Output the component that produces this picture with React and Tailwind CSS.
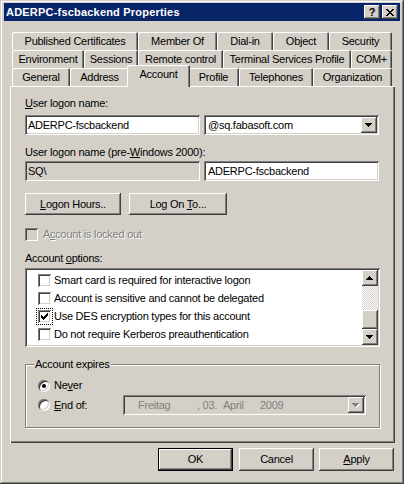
import React from 'react';

const raised =
  'shadow-[inset_-1px_-1px_0_#404040,inset_1px_1px_0_#ffffff,inset_-2px_-2px_0_#808080,inset_2px_2px_0_#d4d0c8]';
const sunken =
  'shadow-[inset_1px_1px_0_#808080,inset_-1px_-1px_0_#ffffff,inset_2px_2px_0_#404040,inset_-2px_-2px_0_#d4d0c8]';

const Arrow = ({ up = false, color = '#000000', shadow = false }) => (
  <svg width="8" height="5" viewBox="0 0 8 5" shapeRendering="crispEdges">
    {shadow && (
      <g fill="#ffffff" transform="translate(1 1)">
        <rect x="0" y="0" width="7" height="1" />
        <rect x="1" y="1" width="5" height="1" />
        <rect x="2" y="2" width="3" height="1" />
        <rect x="3" y="3" width="1" height="1" />
      </g>
    )}
    <g fill={color} transform={up ? 'translate(0 4) scale(1 -1)' : undefined}>
      <rect x="0" y="0" width="7" height="1" />
      <rect x="1" y="1" width="5" height="1" />
      <rect x="2" y="2" width="3" height="1" />
      <rect x="3" y="3" width="1" height="1" />
    </g>
  </svg>
);

const CloseGlyph = () => (
  <svg width="8" height="7" viewBox="0 0 8 7" shapeRendering="crispEdges" fill="#000">
    <rect x="0" y="0" width="2" height="1" />
    <rect x="6" y="0" width="2" height="1" />
    <rect x="1" y="1" width="2" height="1" />
    <rect x="5" y="1" width="2" height="1" />
    <rect x="2" y="2" width="4" height="1" />
    <rect x="3" y="3" width="2" height="1" />
    <rect x="2" y="4" width="4" height="1" />
    <rect x="1" y="5" width="2" height="1" />
    <rect x="5" y="5" width="2" height="1" />
    <rect x="0" y="6" width="2" height="1" />
    <rect x="6" y="6" width="2" height="1" />
  </svg>
);

const Check = ({ checked = false, disabled = false }) => (
  <span
    className={`w-[13px] h-[13px] shrink-0 flex items-center justify-center ${sunken} ${
      disabled ? 'bg-[#d4d0c8]' : 'bg-white'
    }`}
  >
    {checked && (
      <svg width="7" height="7" viewBox="0 0 7 7" shapeRendering="crispEdges" fill="#000">
        <rect x="6" y="0" width="1" height="3" />
        <rect x="5" y="1" width="1" height="3" />
        <rect x="4" y="2" width="1" height="3" />
        <rect x="3" y="3" width="1" height="3" />
        <rect x="2" y="4" width="1" height="3" />
        <rect x="1" y="3" width="1" height="3" />
        <rect x="0" y="2" width="1" height="3" />
      </svg>
    )}
  </span>
);

const Radio = ({ checked = false }) => (
  <span
    className={`w-[12px] h-[12px] shrink-0 rounded-full bg-white flex items-center justify-center ${sunken}`}
  >
    {checked && <span className="w-[4px] h-[4px] rounded-full bg-black" />}
  </span>
);

const Tab = ({ label, w }) => (
  <div
    className="h-[18px] flex items-center justify-center rounded-t-[2px] shadow-[inset_1px_1px_0_#ffffff,inset_-1px_0_0_#404040,inset_-2px_0_0_#808080]"
    style={{ width: w }}
  >
    {label}
  </div>
);

const rows = [
  [
    ['Published Certificates', 126],
    ['Member Of', 79],
    ['Dial-in', 56],
    ['Object', 56],
    ['Security', 63],
  ],
  [
    ['Environment', 72],
    ['Sessions', 54],
    ['Remote control', 85],
    ['Terminal Services Profile', 128],
    ['COM+', 41],
  ],
];

const options = [
  ['Smart card is required for interactive logon', false],
  ['Account is sensitive and cannot be delegated', false],
  ['Use DES encryption types for this account', true],
  ['Do not require Kerberos preauthentication', false],
];

export default function App() {
  return (
    <div className="w-[404px] h-[484px] bg-[#d4d0c8] font-['Liberation_Sans',Arial,sans-serif] text-[11px] leading-[13px] tracking-[-0.25px] text-black select-none pt-[3px] px-[4px] flex flex-col shadow-[inset_-1px_-1px_0_#404040,inset_1px_1px_0_#d4d0c8,inset_-2px_-2px_0_#808080,inset_2px_2px_0_#ffffff]">
      {/* Title bar */}
      <div className="h-[18px] bg-[#0a246a] flex items-center justify-between pl-[2px] pr-[2px]">
        <span className="text-white font-bold tracking-[0.2px]">ADERPC-fscbackend Properties</span>
        <div className="flex gap-[2px]">
          <div className={`w-[16px] h-[14px] bg-[#d4d0c8] flex items-center justify-center font-bold text-[11px] tracking-normal ${raised}`}>
            ?
          </div>
          <div className={`w-[16px] h-[14px] bg-[#d4d0c8] flex items-center justify-center ${raised}`}>
            <CloseGlyph />
          </div>
        </div>
      </div>

      {/* Tabs */}
      <div className="ml-[8px] mt-[11px] w-[380px] flex flex-col">
        {rows.map((row, i) => (
          <div key={i} className="flex">
            {row.map(([label, w]) => (
              <Tab key={label} label={label} w={w} />
            ))}
          </div>
        ))}
        <div className="flex items-end h-[18px]">
          <Tab label="General" w={58} />
          <Tab label="Address" w={59} />
          <div className="relative z-10 w-[63px] -mx-[2px] h-[22px] -mb-[1px] bg-[#d4d0c8] flex items-start justify-center pt-[3px] rounded-t-[2px] shadow-[inset_1px_1px_0_#ffffff,inset_-1px_0_0_#404040,inset_-2px_0_0_#808080]">
            Account
          </div>
          <Tab label="Profile" w={51} />
          <Tab label="Telephones" w={74} />
          <Tab label="Organization" w={79} />
        </div>
      </div>

      {/* Panel */}
      <div className="ml-[6px] w-[385px] h-[357px] pl-[15px] pt-[11px] flex flex-col shadow-[inset_1px_1px_0_#ffffff,inset_-1px_-1px_0_#404040,inset_-2px_-2px_0_#808080]">
        <div>
          <span className="underline">U</span>ser logon name:
        </div>
        <div className="mt-[5px] flex gap-[4px]">
          <div className={`w-[175px] h-[20px] bg-white flex items-center pl-[3px] ${sunken}`}>ADERPC-fscbackend</div>
          <div className={`w-[175px] h-[20px] bg-white flex items-center justify-between pl-[4px] pr-[2px] ${sunken}`}>
            <span>@sq.fabasoft.com</span>
            <div className={`w-[16px] h-[16px] bg-[#d4d0c8] flex items-center justify-center ${raised}`}>
              <Arrow />
            </div>
          </div>
        </div>

        <div className="mt-[11px]">
          User logon name (pre-<span className="underline">W</span>indows 2000):
        </div>
        <div className="mt-[2px] flex gap-[4px]">
          <div className={`w-[175px] h-[20px] bg-[#d4d0c8] flex items-center pl-[3px] ${sunken}`}>SQ\</div>
          <div className={`w-[175px] h-[20px] bg-white flex items-center pl-[4px] ${sunken}`}>ADERPC-fscbackend</div>
        </div>

        <div className="mt-[12px] flex gap-[8px]">
          <div className={`w-[96px] h-[22px] flex items-center justify-center ${raised}`}>
            <span>
              <span className="underline">L</span>ogon Hours..
            </span>
          </div>
          <div className={`w-[98px] h-[22px] flex items-center justify-center ${raised}`}>
            <span>
              Log On <span className="underline">T</span>o...
            </span>
          </div>
        </div>

        <div className="mt-[13px] flex items-center gap-[5px] text-[#808080] [text-shadow:1px_1px_0_#ffffff]">
          <Check disabled />
          <span>
            A<span className="underline">c</span>count is locked out
          </span>
        </div>

        <div className="mt-[11px]">
          Account <span className="underline">o</span>ptions:
        </div>
        <div className={`mt-[3px] w-[355px] h-[79px] bg-white p-[2px] flex ${sunken}`}>
          <div className="flex-1 pt-[1px] pl-[9px]">
            {options.map(([label, checked]) => (
              <div key={label} className="h-[18px] flex items-center">
                <span
                  className={`w-[17px] h-[17px] flex items-center justify-center border border-dotted ${
                    checked ? 'border-black' : 'border-transparent'
                  }`}
                >
                  <Check checked={checked} />
                </span>
                <span className="ml-[1px]">{label}</span>
              </div>
            ))}
          </div>
          <div className="w-[16px] flex flex-col">
            <div className={`h-[16px] bg-[#d4d0c8] flex items-center justify-center ${raised}`}>
              <Arrow up />
            </div>
            <div className="h-[24px] bg-[image:repeating-conic-gradient(#ffffff_0%_25%,#d4d0c8_0%_50%)] bg-[length:2px_2px]" />
            <div className={`h-[19px] bg-[#d4d0c8] ${raised}`} />
            <div className={`h-[16px] bg-[#d4d0c8] flex items-center justify-center ${raised}`}>
              <Arrow />
            </div>
          </div>
        </div>

        {/* Account expires group */}
        <div className="relative mt-[17px] w-[355px] h-[64px] border border-[#808080] shadow-[1px_1px_0_#ffffff,inset_1px_1px_0_#ffffff] pl-[12px] pt-[14px]">
          <span className="absolute -top-[7px] left-[8px] px-[1px] bg-[#d4d0c8]">Account expires</span>
          <div className="flex items-center h-[13px]">
            <Radio checked />
            <span className="ml-[4px]">
              Ne<span className="underline">v</span>er
            </span>
          </div>
          <div className="flex items-center mt-[3px]">
            <div className="w-[85px] flex items-center">
              <Radio />
              <span className="ml-[4px]">
                <span className="underline">E</span>nd of:
              </span>
            </div>
            <div className={`w-[243px] h-[20px] bg-[#d4d0c8] flex items-center pl-[15px] pr-[2px] text-[#808080] ${sunken}`}>
              <span className="w-[59px]">Freitag</span>
              <span className="w-[26px]">, 03.</span>
              <span className="w-[37px]">April</span>
              <span>2009</span>
              <div className={`ml-auto w-[16px] h-[16px] bg-[#d4d0c8] flex items-center justify-center ${raised}`}>
                <Arrow color="#808080" shadow />
              </div>
            </div>
          </div>
        </div>
      </div>

      {/* Dialog buttons */}
      <div className="mt-[5px] flex justify-end pr-[6px]">
        <div className={`w-[75px] h-[23px] border border-black flex items-center justify-center ${raised}`}>OK</div>
        <div className={`ml-[6px] w-[75px] h-[23px] flex items-center justify-center ${raised}`}>Cancel</div>
        <div className={`ml-[5px] w-[75px] h-[23px] flex items-center justify-center ${raised}`}>
          <span>
            <span className="underline">A</span>pply
          </span>
        </div>
      </div>
    </div>
  );
}
